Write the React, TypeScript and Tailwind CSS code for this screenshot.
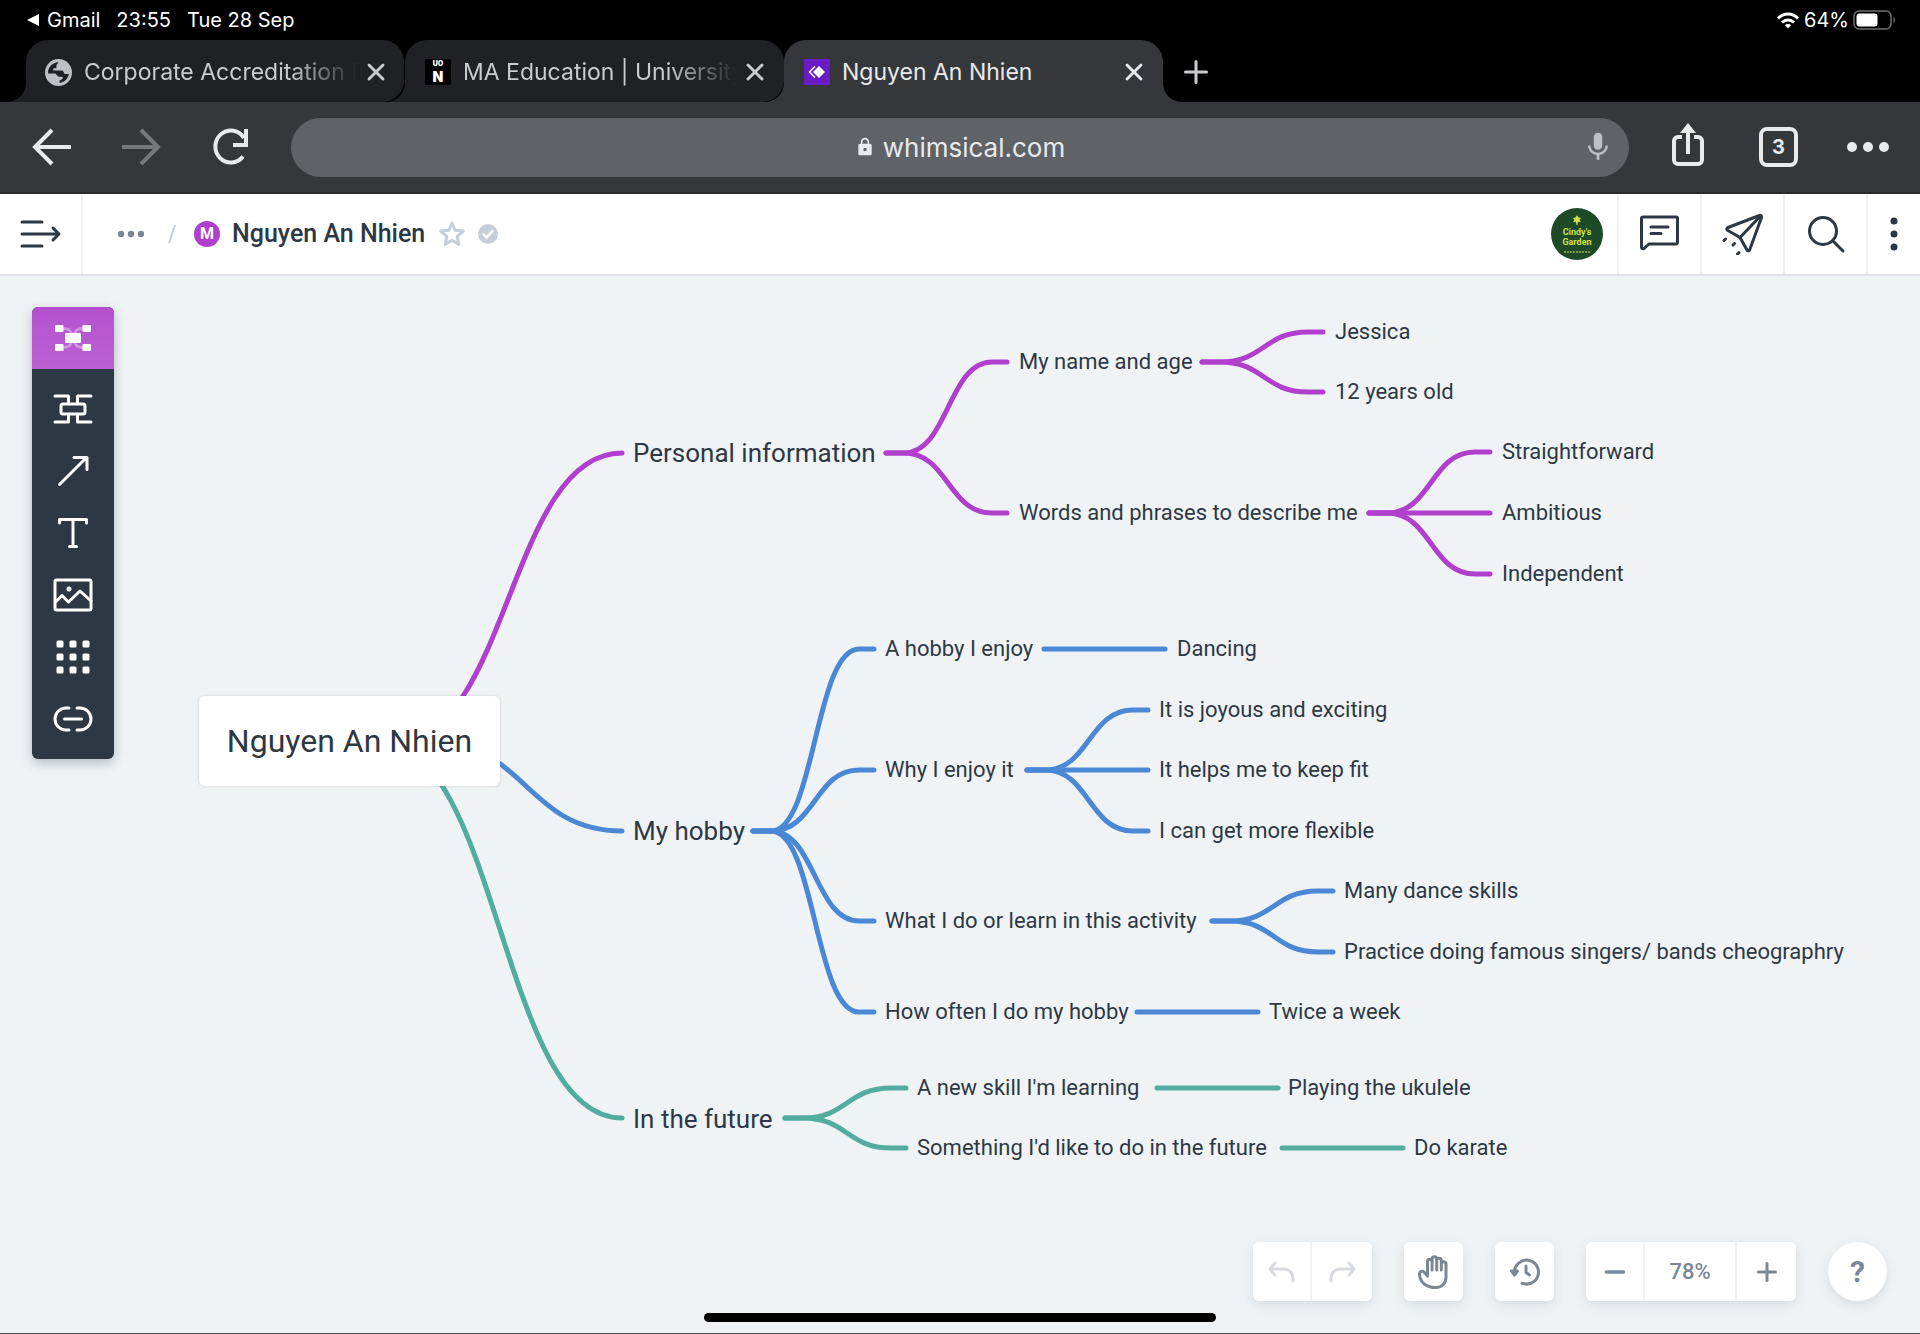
import React from 'react'
import { MdMic, MdLock } from 'react-icons/md'
import { X, Plus } from 'lucide-react'

const PURPLE = '#b03fce'
const BLUE = '#4a88d6'
const GREEN = '#52ad9f'

type Topic = { text: string; x: number; y: number; size?: 'lg' }

// canvas coordinates, x is the left edge of the text and y its middle
const topics: Topic[] = [
  { text: 'Personal information', x: 633, y: 177, size: 'lg' },
  { text: 'My name and age', x: 1019, y: 86 },
  { text: 'Jessica', x: 1335, y: 56 },
  { text: '12 years old', x: 1335, y: 116 },
  { text: 'Words and phrases to describe me', x: 1019, y: 237 },
  { text: 'Straightforward', x: 1502, y: 176 },
  { text: 'Ambitious', x: 1502, y: 237 },
  { text: 'Independent', x: 1502, y: 298 },
  { text: 'My hobby', x: 633, y: 555, size: 'lg' },
  { text: 'A hobby I enjoy', x: 885, y: 373 },
  { text: 'Dancing', x: 1177, y: 373 },
  { text: 'Why I enjoy it', x: 885, y: 494 },
  { text: 'It is joyous and exciting', x: 1159, y: 434 },
  { text: 'It helps me to keep fit', x: 1159, y: 494 },
  { text: 'I can get more flexible', x: 1159, y: 555 },
  { text: 'What I do or learn in this activity', x: 885, y: 645 },
  { text: 'Many dance skills', x: 1344, y: 615 },
  { text: 'Practice doing famous singers/ bands cheographry', x: 1344, y: 676 },
  { text: 'How often I do my hobby', x: 885, y: 736 },
  { text: 'Twice a week', x: 1269, y: 736 },
  { text: 'In the future', x: 633, y: 843, size: 'lg' },
  { text: "A new skill I'm learning", x: 917, y: 812 },
  { text: 'Playing the ukulele', x: 1288, y: 812 },
  { text: "Something I'd like to do in the future", x: 917, y: 872 },
  { text: 'Do karate', x: 1414, y: 872 },
]

const branches = [
  { color: PURPLE, x: 886, y: 177, to: [86, 237] },
  { color: PURPLE, x: 1202, y: 86, to: [56, 116] },
  { color: PURPLE, x: 1369, y: 237, to: [176, 237, 298] },
  { color: BLUE, x: 753, y: 555, to: [373, 494, 645, 736] },
  { color: BLUE, x: 1044, y: 373, to: [373] },
  { color: BLUE, x: 1027, y: 494, to: [434, 494, 555] },
  { color: BLUE, x: 1212, y: 645, to: [615, 676] },
  { color: BLUE, x: 1137, y: 736, to: [736] },
  { color: GREEN, x: 785, y: 842, to: [812, 872] },
  { color: GREEN, x: 1157, y: 812, to: [812] },
  { color: GREEN, x: 1282, y: 872, to: [872] },
]

function branchPath(x: number, y: number, toY: number) {
  return `M${x} ${y}h18C${x + 62} ${y} ${x + 62} ${toY} ${x + 106} ${toY}h15`
}

function MindMap() {
  return (
    <div className="absolute inset-0 overflow-hidden">
      <svg className="absolute inset-0 h-full w-full" fill="none" strokeWidth="5" strokeLinecap="round">
        <path stroke={PURPLE} d="M396 465C509 465 509 177 622 177" />
        <path stroke={BLUE} d="M430 465C526 465 526 555 622 555" />
        <path stroke={GREEN} d="M378 465C500 465 500 842 622 842" />
        {branches.map((b) =>
          b.to.map((toY) => <path key={`${b.x}-${toY}`} stroke={b.color} d={branchPath(b.x, b.y, toY)} />),
        )}
      </svg>

      <div className="absolute left-[199px] top-[420px] flex h-[90px] w-[301px] items-center justify-center rounded-md bg-white text-[32px] text-[#2d3844] shadow-[0_0_3px_rgba(45,56,68,0.2)]">
        Nguyen An Nhien
      </div>

      {topics.map((t) => (
        <span
          key={t.text}
          className={`absolute -translate-y-1/2 whitespace-nowrap leading-8 text-[#2d3844] ${
            t.size === 'lg' ? 'text-[26px]' : 'text-[22px]'
          }`}
          style={{ left: t.x, top: t.y }}
        >
          {t.text}
        </span>
      ))}
    </div>
  )
}

function StatusBar() {
  return (
    <div className="flex h-10 items-center justify-between pl-[27px] pr-6 text-[20px] text-white">
      <div className="flex items-center gap-4">
        <a href="#gmail" className="flex items-center gap-2">
          <svg className="h-3 w-3" viewBox="0 0 12 12" fill="currentColor">
            <path d="M12 0v12L0 6z" />
          </svg>
          Gmail
        </a>
        <span>23:55</span>
        <span>Tue 28 Sep</span>
      </div>
      <div className="flex items-center gap-1">
        <svg className="h-[17px] w-6" viewBox="0 0 24 17" fill="none" stroke="currentColor" strokeWidth="3">
          <path d="M2 6.500C7.500 0.500 16.500 0.500 22 6.500" />
          <path d="M6 10.500C9.500 7 14.500 7 18 10.500" />
          <path d="M8.800 13.200L12 16.500l3.200-3.300c-1.800-1.700-4.600-1.700-6.400 0z" fill="currentColor" stroke="none" />
        </svg>
        <span>64%</span>
        <svg className="h-5 w-[43px]" viewBox="0 0 43 20" fill="none">
          <rect x="1" y="1" width="37" height="18" rx="5" stroke="#6d6d6d" strokeWidth="1.500" />
          <rect x="3.500" y="3.500" width="21" height="13" rx="3" fill="#fff" />
          <path d="M40.500 7v6c2-1 2-5 0-6z" fill="#6d6d6d" />
        </svg>
      </div>
    </div>
  )
}

function Flare({ className }: { className: string }) {
  return (
    <svg className={`absolute bottom-0 h-5 w-5 ${className}`} viewBox="0 0 20 20" fill="currentColor">
      <path d="M20 0v20H0C12 20 20 12 20 0z" />
    </svg>
  )
}

function TabStrip() {
  return (
    <div className="flex h-[62px] items-stretch pl-[26px] text-[23px] text-[#c9cbce]" role="tablist">
      <div className="relative z-30 flex w-[379px] items-center rounded-t-[22px] rounded-br-[22px] border-r border-black bg-[#202124] pl-[19px] pr-[14px] pt-[2px]">
        <Flare className="-left-5 text-[#202124]" />
        <svg className="h-[27px] w-[27px] shrink-0" viewBox="0 0 26 26">
          <circle cx="13" cy="13" r="13" fill="#bdc1c6" />
          <path d="M3 11.500C4 7 8 3.500 13 3l-2 3v3H8v3z" fill="#202124" />
          <path d="M3 11h10v3H3zM12 11h5l2 3.500h4C22 19.500 18.500 22.500 14 23v-2l3-2v-2h-4l-3-3z" fill="#202124" />
        </svg>
        <button role="tab" className="ml-3 flex-1 overflow-hidden whitespace-nowrap text-left [mask-image:linear-gradient(to_right,black_75%,transparent)]">
          Corporate Accreditation Process
        </button>
        <button aria-label="Close tab" className="ml-1">
          <X className="h-7 w-7" strokeWidth={2.5} />
        </button>
      </div>
      <div className="relative z-20 flex w-[379px] items-center rounded-t-[22px] rounded-br-[22px] bg-[#202124] pl-5 pr-[15px] pt-[2px]">
        <Flare className="-left-5 text-[#202124]" />
        <span className="flex h-[26px] w-[26px] shrink-0 flex-col items-center bg-black font-['Inter'] font-black text-white">
          <span className="text-[7px] leading-[9px]">UO</span>
          <span className="text-[14px] leading-[17px]">N</span>
        </span>
        <button role="tab" className="ml-3 flex-1 overflow-hidden whitespace-nowrap text-left [mask-image:linear-gradient(to_right,black_75%,transparent)]">
          MA Education | University of
        </button>
        <button aria-label="Close tab" className="ml-1">
          <X className="h-7 w-7" strokeWidth={2.5} />
        </button>
      </div>
      <div className="relative z-10 flex w-[379px] items-center rounded-t-[22px] bg-[#36373b] pl-5 pr-[15px] pt-[2px] text-[#e8eaed]">
        <Flare className="-left-5 text-[#36373b]" />
        <Flare className="-right-5 -scale-x-100 text-[#36373b]" />
        <svg className="h-[26px] w-[26px] shrink-0" viewBox="0 0 26 26">
          <rect width="26" height="26" fill="#6a1cc4" />
          <path d="M15 7l6 6-6 6-6-6z" fill="#fff" />
          <path d="M11 7.500L5.500 13l5.500 5.500" fill="none" stroke="#fff" strokeWidth="1.500" />
        </svg>
        <button role="tab" aria-selected="true" className="ml-3 flex-1 text-left">
          Nguyen An Nhien
        </button>
        <button aria-label="Close tab">
          <X className="h-7 w-7" strokeWidth={2.5} />
        </button>
      </div>
      <button aria-label="New tab" className="ml-[15px] pt-[2px] text-[#c9cbce]">
        <Plus className="h-9 w-9" strokeWidth={2} />
      </button>
    </div>
  )
}

function BrowserBar() {
  return (
    <div className="flex h-[92px] items-center border-b-2 border-[#2a2a2c] bg-[#36373b] pl-8 pr-[30px] text-[#e8eaed]">
      <button aria-label="Back">
        <svg className="h-10 w-10" viewBox="0 0 40 40" fill="none" stroke="currentColor" strokeWidth="4">
          <path d="M39 20H4M20 3L3 20l17 17" />
        </svg>
      </button>
      <button aria-label="Forward" disabled className="ml-[49px] text-[#77787b]">
        <svg className="h-10 w-10" viewBox="0 0 40 40" fill="none" stroke="currentColor" strokeWidth="4">
          <path d="M1 20h35M20 3l17 17-17 17" />
        </svg>
      </button>
      <button aria-label="Reload" className="ml-[51px]">
        <svg className="h-10 w-10" viewBox="0 0 40 40" fill="none" stroke="currentColor" strokeWidth="4">
          <path d="M31 29.500A15.500 16 0 1 1 32 11" />
          <path d="M34 2v16H21" />
        </svg>
      </button>
      <div className="ml-[39px] mr-10 flex h-[59px] flex-1 items-center rounded-full bg-[#5f6267] pl-12 pr-[14px]">
        <label className="flex flex-1 items-center justify-center gap-2">
          <MdLock className="h-5 w-5" />
          <input aria-label="Address" defaultValue="whimsical.com" className="field-sizing-content bg-transparent text-[26px] outline-none" />
        </label>
        <button aria-label="Voice search" className="text-[#bdc1c6]">
          <MdMic className="h-[38px] w-[34px]" />
        </button>
      </div>
      <button aria-label="Share">
        <svg className="h-12 w-[38px]" viewBox="0 0 38 48" fill="none" stroke="currentColor" strokeWidth="4">
          <path d="M13 14H9a4 4 0 0 0-4 4v19a4 4 0 0 0 4 4h20a4 4 0 0 0 4-4V18a4 4 0 0 0-4-4h-4" />
          <path d="M19 31V6" />
          <path d="M19 0l8 10H11z" fill="currentColor" stroke="none" />
        </svg>
      </button>
      <button className="ml-[52px] flex h-10 w-[39px] items-center justify-center rounded-lg border-4 border-[#e8eaed] text-xl font-bold">
        3
      </button>
      <button aria-label="Menu" className="ml-12">
        <svg className="h-3 w-11" viewBox="0 0 44 12" fill="currentColor">
          <circle cx="6" cy="6" r="5" />
          <circle cx="22" cy="6" r="5" />
          <circle cx="38" cy="6" r="5" />
        </svg>
      </button>
    </div>
  )
}

function BoardHeader() {
  return (
    <header className="flex h-[82px] items-stretch border-b-2 border-[#e1e4ea] bg-white text-[#2d3844]">
      <button aria-label="Open sidebar" className="flex w-[83px] items-center border-r-2 border-[#eff2f5] pl-5">
        <svg className="h-7 w-[42px]" viewBox="0 0 42 28" fill="none" stroke="currentColor" strokeWidth="3" strokeLinecap="round" strokeLinejoin="round">
          <path d="M2 2h20M2 14h36M2 26h20M33 8l6 6-6 6" />
        </svg>
      </button>
      <div className="flex flex-1 items-center pl-[35px]">
        <button aria-label="Parent folders">
          <svg className="h-2 w-[26px]" viewBox="0 0 26 8" fill="#7b8794">
            <circle cx="3" cy="4" r="3.200" />
            <circle cx="13" cy="4" r="3.200" />
            <circle cx="23" cy="4" r="3.200" />
          </svg>
        </button>
        <svg className="ml-6 h-5 w-2" viewBox="0 0 8 20" fill="none" stroke="#c5ced9" strokeWidth="2">
          <path d="M7 1L1 19" />
        </svg>
        <span className="ml-[18px] flex h-[26px] w-[26px] items-center justify-center rounded-full bg-[#b03fce] text-base font-bold text-white">M</span>
        <h1 className="ml-3 text-[25px] font-medium">Nguyen An Nhien</h1>
        <button aria-label="Favorite" className="ml-[14px]">
          <svg className="h-[26px] w-[26px]" viewBox="0 0 26 26" fill="none" stroke="#c5ced9" strokeWidth="3" strokeLinejoin="round">
            <path d="M13 2l3.200 7.300 8 .8-6 5.300 1.700 8L13 19.300 6.100 23.400l1.700-8-6-5.300 8-.8z" />
          </svg>
        </button>
        <svg className="ml-[13px] h-5 w-5" viewBox="0 0 20 20">
          <circle cx="10" cy="10" r="10" fill="#c5ced9" />
          <path d="M5.500 10.500l3 3 6-6.500" fill="none" stroke="#fff" strokeWidth="2.500" strokeLinecap="round" />
        </svg>
      </div>
      <div className="flex items-center pr-[14px]">
        <div className="flex h-[52px] w-[52px] flex-col items-center rounded-full bg-[#1f4a28] pt-[7px] text-[9px] font-bold leading-[10px] text-[#cde04a]">
          <svg className="mb-[2px] h-[10px] w-2" viewBox="0 0 8 10" fill="currentColor">
            <path d="M4 0l1.500 2.500L8 3 6.500 5 8 7H5l-.5 3h-1L3 7H0l1.500-2L0 3l2.500-.5z" />
          </svg>
          <span>Cindy's</span>
          <span>Garden</span>
          <svg className="mt-1 h-[2px] w-[26px]" viewBox="0 0 26 2" stroke="#7d9a3c" strokeWidth="2" strokeDasharray="2 1">
            <path d="M0 1h26" />
          </svg>
        </div>
      </div>
      <button aria-label="Comments" className="flex w-[83px] items-center justify-center border-l-2 border-[#eff2f5]">
        <svg className="h-[42px] w-[42px]" viewBox="0 0 42 42" fill="none" stroke="currentColor" strokeWidth="3" strokeLinecap="round" strokeLinejoin="round">
          <path d="M4 4h33a1.500 1.500 0 0 1 1.500 1.500v24A1.500 1.500 0 0 1 37 31H10l-5 4.500c-1 .8-2.500 0-2.500-1v-29A1.500 1.500 0 0 1 4 4z" />
          <path d="M12 14h17M12 20.500h10" />
        </svg>
      </button>
      <button aria-label="Share board" className="flex w-[83px] items-center justify-center border-l-2 border-[#eff2f5]">
        <svg className="h-[42px] w-[42px]" viewBox="0 0 42 42" fill="none" stroke="currentColor" strokeWidth="3" strokeLinecap="round" strokeLinejoin="round">
          <path d="M37.500 2.500L6 14.500c-1.500.6-1.500 2-.5 2.800L18 24.500l7 12.500c.8 1.400 2.300 1 2.700-.3L39.500 4.500c.5-1.300-.5-2.500-2-2z" />
          <path d="M18 24.500L38.500 3" />
          <path d="M3.500 26l-1.500 1.500M12.500 30.500l-1.500 1.500M17 39.500l-1.500 1.500" />
        </svg>
      </button>
      <button aria-label="Search" className="flex w-[83px] items-center justify-center border-l-2 border-[#eff2f5]">
        <svg className="h-10 w-10" viewBox="0 0 40 40" fill="none" stroke="currentColor" strokeWidth="3" strokeLinecap="round">
          <circle cx="17" cy="17" r="13.500" />
          <path d="M27 27l10 10" />
        </svg>
      </button>
      <button aria-label="More" className="flex w-[54px] items-center justify-center border-l-2 border-[#eff2f5]">
        <svg className="h-9 w-2" viewBox="0 0 8 36" fill="currentColor">
          <circle cx="4" cy="5" r="3.500" />
          <circle cx="4" cy="18" r="3.500" />
          <circle cx="4" cy="31" r="3.500" />
        </svg>
      </button>
    </header>
  )
}

const tools = [
  {
    name: 'Section',
    icon: <path d="M2 7h13.500v8M38 7H24.500v8M2 33h13.500v-8M38 33H24.500v-8M10 15h20a2 2 0 0 1 2 2v6a2 2 0 0 1-2 2H10a2 2 0 0 1-2-2v-6a2 2 0 0 1 2-2z" />,
  },
  { name: 'Connector', icon: <path d="M6.500 33.500L33 7M21 6.500h13v12" /> },
  { name: 'Text', icon: <path d="M6.500 10V6.500h27V10M20 6.500v27M16.500 33.500h7" /> },
  {
    name: 'Image',
    icon: (
      <>
        <rect x="2" y="5" width="36" height="30" rx="1.500" />
        <path d="M2.500 27l6.500-6.500 6.500 6.500L27 16l11 10" />
        <circle cx="16" cy="14" r="1" />
      </>
    ),
  },
  {
    name: 'Icons',
    icon: [7, 20, 33].map((y) => [7, 20, 33].map((x) => <rect key={`${x}-${y}`} x={x - 2} y={y - 2} width="4" height="4" fill="currentColor" />)),
  },
  { name: 'Link', icon: <path d="M16 9h-3a11 11 0 0 0 0 22h3M24 9h3a11 11 0 0 1 0 22h-3M11.500 20h17" /> },
]

function Toolbox() {
  return (
    <nav className="absolute left-8 top-[31px] flex w-[82px] flex-col overflow-hidden rounded-md bg-[#2d3844] pb-[9px] text-white shadow-[0_4px_12px_rgba(45,56,68,0.3)]">
      <button aria-label="Mind map" className="mb-[9px] flex h-[62px] items-center justify-center bg-linear-to-b from-[#b450cf] to-[#bb62d3]">
        <svg className="h-10 w-10" viewBox="0 0 40 40" fill="currentColor">
          <path d="M10 10.500c12 0 7 9.500 10 9.500s-2-9.500 10-9.500M10 29.500c12 0 7-9.500 10-9.500s-2 9.500 10 9.500" fill="none" stroke="currentColor" strokeWidth="3" opacity=".35" />
          <rect x="2" y="7" width="8.500" height="7" rx="1" />
          <rect x="29.500" y="7" width="8.500" height="7" rx="1" />
          <rect x="2" y="26" width="8.500" height="7" rx="1" />
          <rect x="29.500" y="26" width="8.500" height="7" rx="1" />
          <rect x="12" y="15" width="16" height="10" rx="1.500" />
        </svg>
      </button>
      {tools.map((tool) => (
        <button key={tool.name} aria-label={tool.name} className="flex h-[62px] items-center justify-center">
          <svg className="h-10 w-10" viewBox="0 0 40 40" fill="none" stroke="currentColor" strokeWidth="3" strokeLinecap="round" strokeLinejoin="round">
            {tool.icon}
          </svg>
        </button>
      ))}
    </nav>
  )
}

function CanvasControls() {
  return (
    <div className="absolute bottom-8 right-[33px] flex gap-8 text-[#7b8794] *:h-[59px] *:bg-white *:shadow-[0_4px_12px_rgba(45,56,68,0.12)]">
      <div className="flex rounded-md text-[#d8dce1]">
        <button aria-label="Undo" disabled className="flex w-[59px] items-center justify-center border-r-2 border-[#eff2f5]">
          <svg className="h-8 w-8" viewBox="0 0 32 32" fill="none" stroke="currentColor" strokeWidth="3" strokeLinecap="round" strokeLinejoin="round">
            <path d="M9 7l-5 6 5 6M4 13h14a9 9 0 0 1 9 9v3" />
          </svg>
        </button>
        <button aria-label="Redo" disabled className="flex w-[60px] items-center justify-center">
          <svg className="h-8 w-8" viewBox="0 0 32 32" fill="none" stroke="currentColor" strokeWidth="3" strokeLinecap="round" strokeLinejoin="round">
            <path d="M23 7l5 6-5 6M28 13H14a9 9 0 0 0-9 9v3" />
          </svg>
        </button>
      </div>
      <button aria-label="Pan" className="flex w-[59px] items-center justify-center rounded-md">
        <svg className="h-9 w-9" viewBox="0 0 36 36" fill="none" stroke="currentColor" strokeWidth="3" strokeLinecap="round" strokeLinejoin="round">
          <path d="M11.500 21V7.500a2.300 2.300 0 0 1 4.600 0V16 5a2.300 2.300 0 0 1 4.600 0v11-9.500a2.300 2.300 0 0 1 4.600 0V16v-6a2.300 2.300 0 0 1 4.700 0v13c0 6-4 10.500-10 10.500C11 33.500 4 29 3.500 20.500c0-3.500 3-4 4.500-2.500l3.500 4" />
        </svg>
      </button>
      <button aria-label="History" className="flex w-[59px] items-center justify-center rounded-md">
        <svg className="h-8 w-8" viewBox="0 0 32 32" fill="none" stroke="currentColor" strokeWidth="3" strokeLinecap="round" strokeLinejoin="round">
          <path d="M5.500 16a12 12 0 1 1 7.500 11.200" />
          <path d="M2.500 15h6L5.500 19z" fill="currentColor" />
          <path d="M17 10v6.500l3.500 2.500" />
        </svg>
      </button>
      <div className="flex rounded-md">
        <button aria-label="Zoom out" className="flex w-[59px] items-center justify-center border-r-2 border-[#eff2f5]">
          <svg className="h-6 w-6" viewBox="0 0 24 24" stroke="currentColor" strokeWidth="3.500" strokeLinecap="round">
            <path d="M3.500 12h17" />
          </svg>
        </button>
        <button className="w-[92px] border-r-2 border-[#eff2f5] text-[22px] font-medium">78%</button>
        <button aria-label="Zoom in" className="flex w-[59px] items-center justify-center">
          <svg className="h-6 w-6" viewBox="0 0 24 24" stroke="currentColor" strokeWidth="3" strokeLinecap="round">
            <path d="M3.500 12h17M12 3.500v17" />
          </svg>
        </button>
      </div>
      <button aria-label="Help" className="w-[59px] rounded-full text-[30px] font-bold">
        ?
      </button>
    </div>
  )
}

export default function App() {
  return (
    <div className="flex min-h-screen flex-col bg-black font-['Inter',sans-serif]">
      <StatusBar />
      <TabStrip />
      <BrowserBar />
      <div className="flex flex-1 flex-col font-['Roboto',sans-serif]">
        <BoardHeader />
        <main className="relative min-h-[1000px] flex-1 border-b border-[#4a4b4f] bg-[#eff3f6]">
          <MindMap />
          <Toolbox />
          <CanvasControls />
          <div className="absolute bottom-[11px] left-1/2 h-[9px] w-[512px] -translate-x-1/2 rounded-full bg-black" />
        </main>
      </div>
    </div>
  )
}
